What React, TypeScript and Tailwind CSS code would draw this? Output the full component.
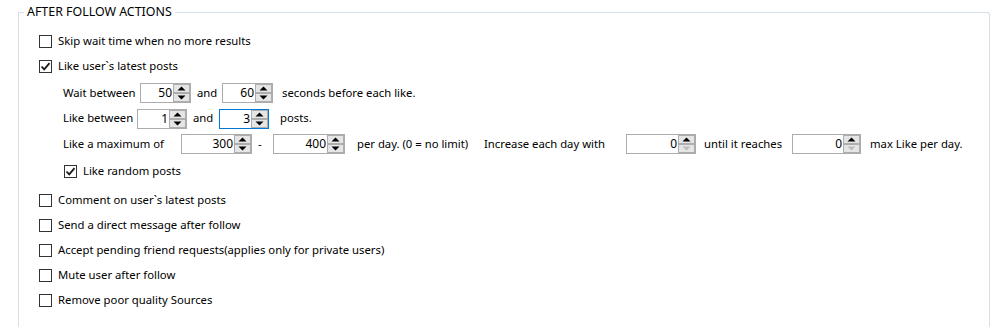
import React from "react";

const font = { fontFamily: '"Noto Sans", "Segoe UI", sans-serif' };

const Check = ({ checked }: { checked?: boolean }) => (
  <span className="w-[13px] h-[13px] border border-[#333333] bg-white flex items-center justify-center shrink-0">
    {checked && (
      <svg width="11" height="11" viewBox="0 0 11 11">
        <path d="M1.5 5.5 L4.2 8.3 L9.5 2.2" fill="none" stroke="#1a1a1a" strokeWidth="1.8" />
      </svg>
    )}
  </span>
);

const CheckRow = ({ label, checked, className = "" }: { label: string; checked?: boolean; className?: string }) => (
  <div className={`h-[25px] flex items-center gap-[6px] whitespace-nowrap ${className}`}>
    <Check checked={checked} />
    <span>{label}</span>
  </div>
);

const Arrow = ({ up, disabled }: { up?: boolean; disabled?: boolean }) => (
  <svg width="9" height="5" viewBox="0 0 9 5">
    <path
      d={up ? "M0.5 4.5 L4.5 0.5 L8.5 4.5 Z" : "M0.5 0.5 L4.5 4.5 L8.5 0.5 Z"}
      fill={disabled ? "#bcbcbc" : "#000"}
    />
  </svg>
);

const Spin = ({
  value,
  width,
  focused,
  downDisabled,
}: {
  value: string;
  width: string;
  focused?: boolean;
  downDisabled?: boolean;
}) => (
  <div
    className={`h-[20px] flex items-stretch border bg-white shrink-0 ${width} ${
      focused ? "border-[#0078d7]" : "border-[#acacac]"
    }`}
  >
    <span className="flex-1 text-right pr-[1px] leading-[18px] text-[12px]">{value}</span>
    <div className="w-[17px] flex flex-col">
      <div className="h-[9px] border border-[#adadad] bg-[#e5e5e5] flex items-center justify-center">
        <Arrow up />
      </div>
      <div className="h-[9px] border border-[#adadad] bg-[#e5e5e5] flex items-center justify-center">
        <Arrow disabled={downDisabled} />
      </div>
    </div>
  </div>
);

export default function App() {
  return (
    <div className="w-[996px] h-[327px] bg-white overflow-hidden text-[11.3px] text-black" style={font}>
      <fieldset className="ml-[18px] mt-[4px] w-[972px] h-[323px] border-x border-t border-[#d5dfe5] rounded-tr-[3px] p-0 min-w-0">
        <legend className="ml-[5px] px-[3px] leading-[16px] text-[12.4px]">AFTER FOLLOW ACTIONS</legend>
        <div className="pt-[9px] pl-[20px] flex flex-col">
          <CheckRow label="Skip wait time when no more results" />
          <CheckRow label="Like user`s latest posts" checked />

          <div className="pl-[24px] flex flex-col whitespace-nowrap">
            <div className="h-[26px] mt-[1px] flex items-center">
              <span className="w-[77px] shrink-0">Wait between</span>
              <Spin value="50" width="w-[51px]" />
              <span className="ml-[6px] w-[25px] shrink-0">and</span>
              <Spin value="60" width="w-[51px]" />
              <span className="ml-[9px]">seconds before each like.</span>
            </div>
            <div className="h-[25px] flex items-center">
              <span className="w-[74px] shrink-0">Like between</span>
              <Spin value="1" width="w-[50px]" />
              <span className="ml-[6px] w-[26px] shrink-0">and</span>
              <Spin value="3" width="w-[50px]" focused />
              <span className="ml-[11px]">posts.</span>
            </div>
            <div className="h-[26px] flex items-center">
              <span className="w-[118px] shrink-0">Like a maximum of</span>
              <Spin value="300" width="w-[71px]" />
              <span className="ml-[6px] w-[15px] shrink-0">-</span>
              <Spin value="400" width="w-[72px]" />
              <span className="ml-[12px] w-[127px] shrink-0">per day. (0 = no limit)</span>
              <span className="w-[142px] shrink-0">Increase each day with</span>
              <Spin value="0" width="w-[70px]" downDisabled />
              <span className="ml-[8px] w-[88px] shrink-0">until it reaches</span>
              <Spin value="0" width="w-[69px]" downDisabled />
              <span className="ml-[9px]">max Like per day.</span>
            </div>
            <CheckRow label="Like random posts" checked className="h-[28px] pl-[1px]" />
          </div>

          <CheckRow label="Comment on user`s latest posts" className="mt-[3px]" />
          <CheckRow label="Send a direct message after follow" />
          <CheckRow label="Accept pending friend requests(applies only for private users)" />
          <CheckRow label="Mute user after follow" />
          <CheckRow label="Remove poor quality Sources" />
        </div>
      </fieldset>
    </div>
  );
}
